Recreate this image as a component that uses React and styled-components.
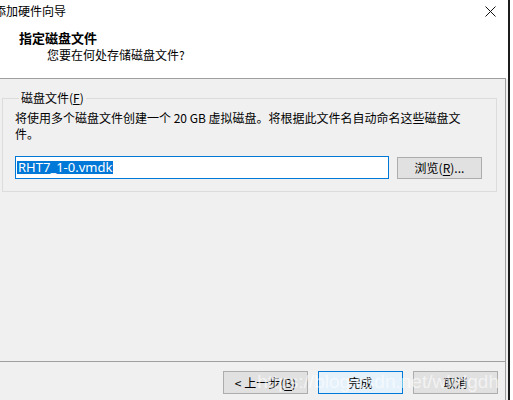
import React from "react";
import styled, { createGlobalStyle } from "styled-components";

const GlobalStyle = createGlobalStyle`
  html, body {
    margin: 0;
    padding: 0;
    background: #ffffff;
  }
  body {
    font-family: "Noto Sans CJK SC", "Noto Sans", sans-serif;
    font-size: 12px;
    color: #000;
  }
`;

const App = () => {
  return (
    <>
      <GlobalStyle />
      <Page>
        <Window>
          <Header>
            <TitleBar>
              <WindowTitle>添加硬件向导</WindowTitle>
              <CloseButton>
                <svg width="11" height="11" viewBox="0 0 11 11">
                  <path d="M0.5 0.5 L10.5 10.5 M10.5 0.5 L0.5 10.5" stroke="#111" strokeWidth="1" fill="none" />
                </svg>
              </CloseButton>
            </TitleBar>
            <StepTitle>指定磁盘文件</StepTitle>
            <StepSubtitle>您要在何处存储磁盘文件?</StepSubtitle>
          </Header>
          <Body>
            <Group>
              <Legend>
                磁盘文件(<u>F</u>)
              </Legend>
              <Description>
                将使用多个磁盘文件创建一个 20 GB 虚拟磁盘。将根据此文件名自动命名这些磁盘文件。
              </Description>
              <FileRow>
                <FileInput>
                  <Selected>RHT7_1-0.vmdk</Selected>
                </FileInput>
                <Button $width={85} $height={22}>
                  浏览(<u>R</u>)...
                </Button>
              </FileRow>
            </Group>
            <Spacer />
            <Footer>
              <Button>
                &lt; 上一步(<u>B</u>)
              </Button>
              <Button $primary>完成</Button>
              <Button>取消</Button>
            </Footer>
          </Body>
        </Window>
        <Edge />
        <Watermark>https://blog.csdn.net/wlrdgdh</Watermark>
      </Page>
    </>
  );
};

export default App;

const Page = styled.div`
  position: relative;
  width: 513px;
  height: 400px;
  display: flex;
  overflow: hidden;
`;

const Window = styled.div`
  width: 506px;
  height: 400px;
  display: flex;
  flex-direction: column;
`;

const Edge = styled.div`
  width: 2px;
  height: 400px;
  background: linear-gradient(#ffffff 0, #ffffff 79px, #f0f0f0 79px);
  border-right: 2px solid #1c1c1c;
`;

const Header = styled.div`
  height: 78px;
  background: #ffffff;
  border-bottom: 1px solid #a0a0a0;
  display: flex;
  flex-direction: column;
`;

const TitleBar = styled.div`
  height: 21px;
  display: flex;
  align-items: center;
  justify-content: space-between;
`;

const WindowTitle = styled.span`
  margin-left: -6px;
  font-size: 12px;
  line-height: 16px;
`;

const CloseButton = styled.span`
  display: flex;
  margin-right: 10px;
  margin-top: 1px;
`;

const StepTitle = styled.div`
  margin: 8px 0 0 19px;
  font-size: 13px;
  font-weight: 700;
  line-height: 17px;
`;

const StepSubtitle = styled.div`
  margin: 1px 0 0 47px;
  font-size: 12px;
  line-height: 16px;
`;

const Body = styled.div`
  flex: 1;
  background: #f0f0f0;
  border-right: 1px solid #a0a0a0;
  display: flex;
  flex-direction: column;
`;

const Group = styled.fieldset`
  margin: 11px 8px 0 2px;
  padding: 4px 12px 12px 11px;
  border: 1px solid #dcdcdc;
  min-width: 0;
`;

const Legend = styled.legend`
  margin-left: 5px;
  padding: 0 2px 0 2px;
  font-size: 12px;
  line-height: 16px;
`;

const Description = styled.div`
  width: 454px;
  margin-left: 1px;
  line-height: 16px;
`;

const FileRow = styled.div`
  margin-top: 14px;
  display: flex;
  align-items: center;
  gap: 8px;
`;

const FileInput = styled.div`
  box-sizing: border-box;
  width: 374px;
  height: 23px;
  margin-left: 1px;
  border: 1px solid #0078d7;
  background: #ffffff;
  display: flex;
  align-items: center;
  padding-left: 1px;
`;

const Selected = styled.span`
  background: #0078d7;
  color: #ffffff;
  font-family: "Noto Sans", "Liberation Sans", sans-serif;
  font-size: 13px;
  line-height: 13px;
  padding: 0 1px 0 1px;
`;

const Button = styled.div`
  box-sizing: border-box;
  width: ${(p) => p.$width || 85}px;
  height: ${(p) => p.$height || 23}px;
  display: flex;
  align-items: center;
  justify-content: center;
  background: ${(p) => (p.$primary ? "#e5f1fb" : "#e1e1e1")};
  border: 1px solid ${(p) => (p.$primary ? "#0078d7" : "#adadad")};
  font-size: 12px;
  line-height: 16px;
  white-space: nowrap;

  u {
    text-decoration-thickness: 1px;
    text-underline-offset: 2px;
  }
`;

const Spacer = styled.div`
  flex: 1;
`;

const Footer = styled.div`
  height: 39px;
  box-sizing: border-box;
  border-top: 1px solid #a0a0a0;
  padding: 9px 7px 0 0;
  display: flex;
  justify-content: flex-end;
  align-items: flex-start;
  gap: 10px;
`;

const Watermark = styled.div`
  position: absolute;
  right: 14px;
  top: 370px;
  font-family: "Liberation Sans", Arial, sans-serif;
  font-size: 19px;
  line-height: 24px;
  color: rgba(255, 255, 255, 0.6);
  pointer-events: none;
  white-space: nowrap;
`;
